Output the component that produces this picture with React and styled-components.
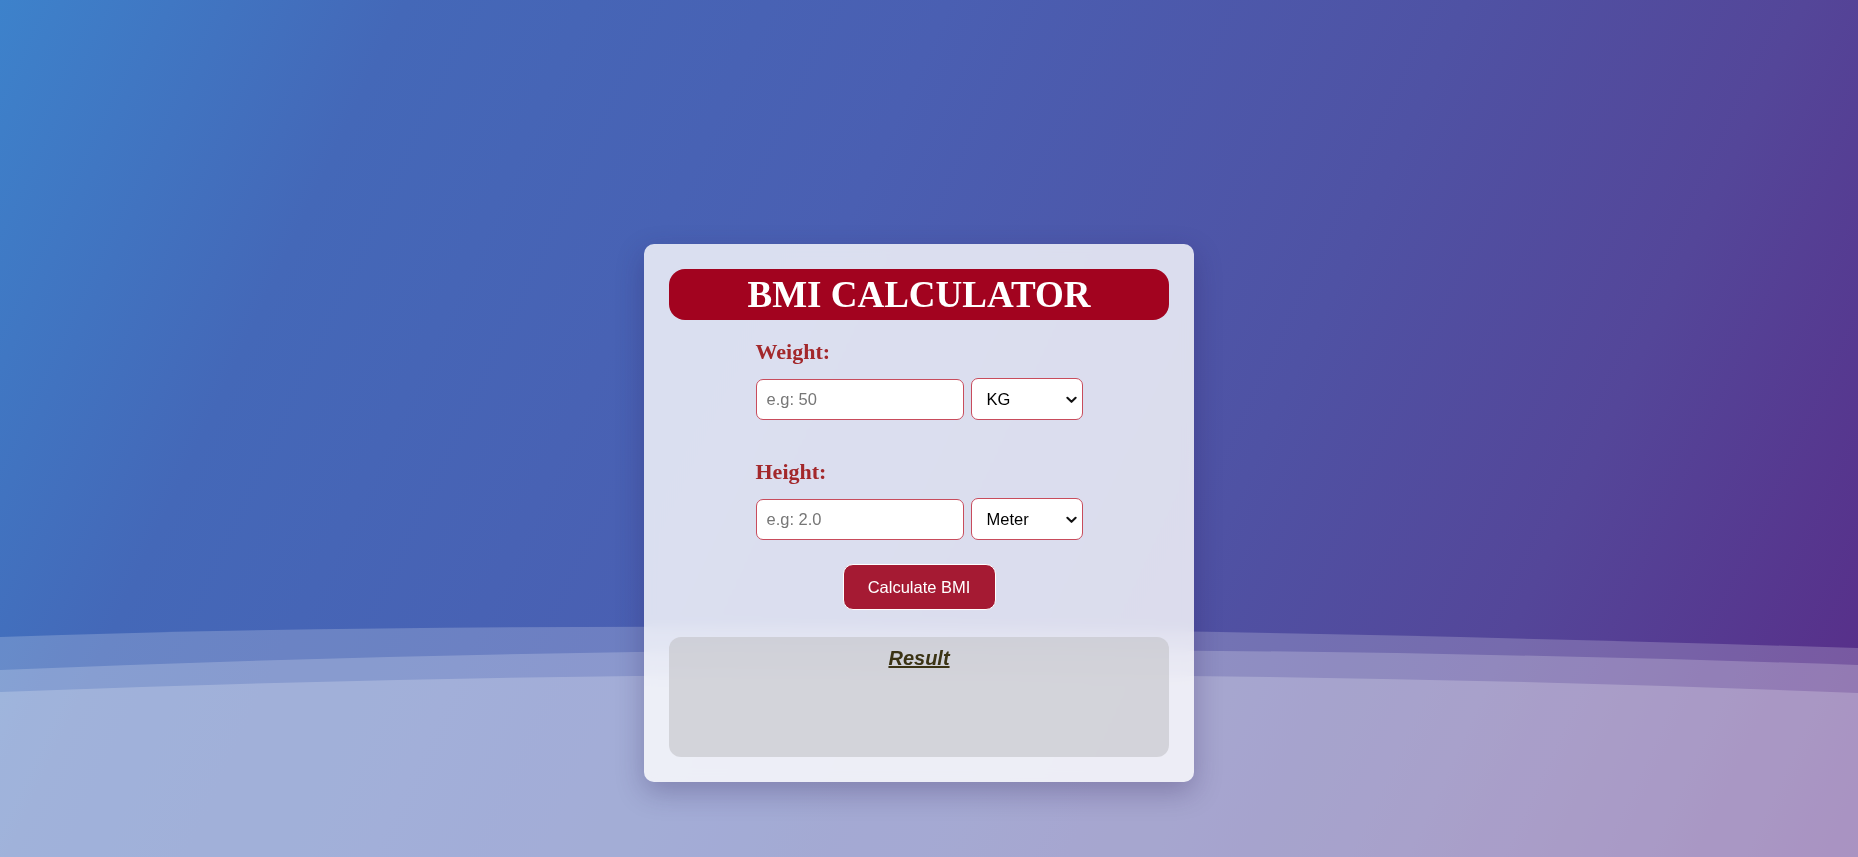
import React from 'react'
import styled, { createGlobalStyle } from 'styled-components'

const GlobalStyle = createGlobalStyle`
  * {
    box-sizing: border-box;
  }
  body {
    margin: 0;
    font-family: "Liberation Sans", Arial, sans-serif;
  }
`;

const Waves = () => (
  <WaveLayer viewBox="0 0 1858 857" preserveAspectRatio="none" aria-hidden="true">
    <path d="M0,637 Q700,612 1858,648 L1858,857 L0,857 Z" fill="rgba(255,255,255,0.2)" />
    <path d="M0,670 Q900,632 1858,665 L1858,857 L0,857 Z" fill="rgba(255,255,255,0.2)" />
    <path d="M0,692 Q929,656 1858,693 L1858,857 L0,857 Z" fill="rgba(255,255,255,0.21)" />
  </WaveLayer>
);

const UnitSelect = ({ children, defaultValue }) => (
  <SelectWrap>
    <Select defaultValue={defaultValue}>{children}</Select>
    <Chevron viewBox="0 0 12 8" aria-hidden="true">
      <path d="M1.5 1.5 L6 6 L10.5 1.5" />
    </Chevron>
  </SelectWrap>
);

const App = () => {
  return (
    <Page>
      <GlobalStyle />
      <Waves />
      <Stage>
        <Card>
          <Title>BMI CALCULATOR</Title>
          <Form onSubmit={(e) => e.preventDefault()}>
            <Field>
              <Label htmlFor="weight">Weight:</Label>
              <Row>
                <Input id="weight" type="text" placeholder="e.g: 50" />
                <UnitSelect defaultValue="kg">
                  <option value="kg">KG</option>
                  <option value="lb">LB</option>
                </UnitSelect>
              </Row>
            </Field>
            <Field spaced>
              <Label htmlFor="height">Height:</Label>
              <Row>
                <Input id="height" type="text" placeholder="e.g: 2.0" />
                <UnitSelect defaultValue="m">
                  <option value="m">Meter</option>
                  <option value="cm">CM</option>
                  <option value="ft">Feet</option>
                </UnitSelect>
              </Row>
            </Field>
            <Button type="submit">Calculate BMI</Button>
          </Form>
          <ResultBox>
            <ResultTitle>Result</ResultTitle>
          </ResultBox>
        </Card>
      </Stage>
    </Page>
  );
};

const Page = styled.div`
  position: relative;
  min-height: 100vh;
  overflow: hidden;
  background: linear-gradient(
    115deg,
    #3d82cb 0%,
    #4468b8 18%,
    #4a5fb2 42%,
    #4f52a4 65%,
    #544699 80%,
    #582a86 100%
  );
`;

const WaveLayer = styled.svg`
  position: absolute;
  inset: 0;
  width: 100%;
  height: 100%;
  pointer-events: none;
`;

const Stage = styled.div`
  position: relative;
  display: flex;
  justify-content: center;
  padding: 244px 20px 40px 0;
`;

const Card = styled.div`
  width: 550px;
  padding: 25px;
  border-radius: 10px;
  background-color: rgba(255, 255, 255, 0.8);
  -webkit-backdrop-filter: blur(6px);
  backdrop-filter: blur(6px);
  box-shadow: 0 10px 28px rgba(40, 20, 80, 0.28);
`;

const Title = styled.h1`
  margin: 0;
  height: 51px;
  line-height: 51px;
  border-radius: 16px;
  background-color: #a2031f;
  color: #ffffff;
  text-align: center;
  font-family: "Liberation Serif", "Times New Roman", serif;
  font-size: 37px;
  font-weight: 700;
`;

const Form = styled.form`
  width: 327px;
  margin: 20px auto 0;
  display: flex;
  flex-direction: column;
`;

const Field = styled.div`
  display: flex;
  flex-direction: column;
  gap: 14px;
  margin-top: ${({ spaced }) => (spaced ? '40px' : '0')};
`;

const Label = styled.label`
  display: block;
  line-height: 24px;
  font-family: "Liberation Serif", "Times New Roman", serif;
  font-size: 22px;
  font-weight: 700;
  color: #a3282b;
`;

const Row = styled.div`
  display: flex;
  align-items: flex-end;
  gap: 7px;
`;

const Input = styled.input`
  width: 208px;
  height: 41px;
  padding: 0 10px;
  border: 1px solid #c84c5c;
  border-radius: 7px;
  background: #ffffff;
  font-family: "Liberation Sans", Arial, sans-serif;
  font-size: 16.5px;
  color: #000;
  outline: none;
  &::placeholder {
    color: #767676;
  }
`;

const SelectWrap = styled.div`
  position: relative;
  width: 112px;
  height: 42px;
`;

const Select = styled.select`
  appearance: none;
  -webkit-appearance: none;
  width: 100%;
  height: 100%;
  padding: 0 24px 0 15px;
  border: 1px solid #c84c5c;
  border-radius: 7px;
  background: #ffffff;
  font-family: "Liberation Sans", Arial, sans-serif;
  font-size: 16.5px;
  color: #000;
  outline: none;
`;

const Chevron = styled.svg`
  position: absolute;
  right: 6px;
  top: 18px;
  width: 11px;
  height: 8px;
  pointer-events: none;
  fill: none;
  stroke: #111;
  stroke-width: 2.2;
  stroke-linecap: round;
  stroke-linejoin: round;
`;

const Button = styled.button`
  align-self: center;
  margin-top: 24px;
  width: 153px;
  height: 46px;
  border: 1.5px solid #ffffff;
  border-radius: 10px;
  background-color: #a51a33;
  color: #ffffff;
  font-family: "Liberation Sans", Arial, sans-serif;
  font-size: 16.5px;
  cursor: pointer;
`;

const ResultBox = styled.div`
  margin-top: 27px;
  height: 120px;
  padding-top: 10px;
  border-radius: 12px;
  background-color: rgba(196, 196, 200, 0.62);
  text-align: center;
`;

const ResultTitle = styled.h3`
  margin: 0;
  line-height: 23px;
  font-family: "Liberation Sans", Arial, sans-serif;
  font-size: 20px;
  font-weight: 700;
  font-style: italic;
  text-decoration: underline;
  color: #3b3314;
`;

export default App;
